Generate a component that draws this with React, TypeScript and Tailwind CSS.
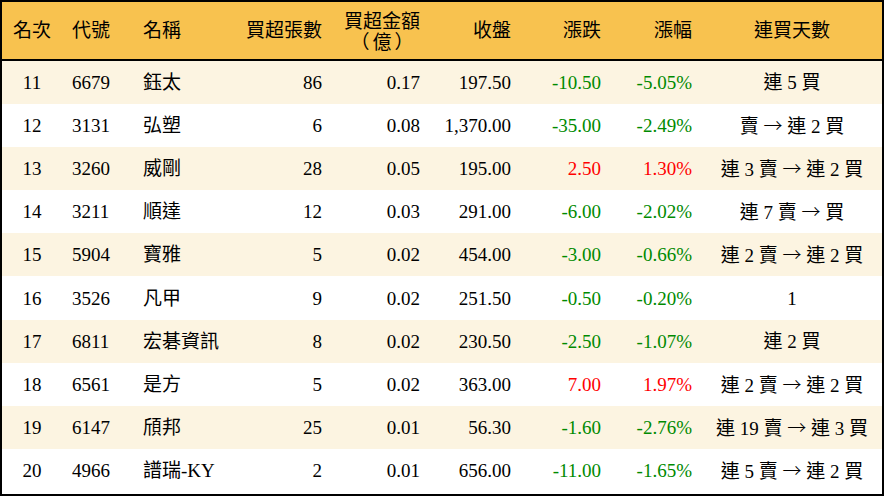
import React from 'react';

type Row = {
  rank: string;
  code: string;
  name: string;
  lots: string;
  amount: string;
  close: string;
  change: string;
  pct: string;
  streak: string;
};

const rows: Row[] = [
  { rank: '11', code: '6679', name: '鈺太', lots: '86', amount: '0.17', close: '197.50', change: '-10.50', pct: '-5.05%', streak: '連 5 買' },
  { rank: '12', code: '3131', name: '弘塑', lots: '6', amount: '0.08', close: '1,370.00', change: '-35.00', pct: '-2.49%', streak: '賣 → 連 2 買' },
  { rank: '13', code: '3260', name: '威剛', lots: '28', amount: '0.05', close: '195.00', change: '2.50', pct: '1.30%', streak: '連 3 賣 → 連 2 買' },
  { rank: '14', code: '3211', name: '順達', lots: '12', amount: '0.03', close: '291.00', change: '-6.00', pct: '-2.02%', streak: '連 7 賣 → 買' },
  { rank: '15', code: '5904', name: '寶雅', lots: '5', amount: '0.02', close: '454.00', change: '-3.00', pct: '-0.66%', streak: '連 2 賣 → 連 2 買' },
  { rank: '16', code: '3526', name: '凡甲', lots: '9', amount: '0.02', close: '251.50', change: '-0.50', pct: '-0.20%', streak: '1' },
  { rank: '17', code: '6811', name: '宏碁資訊', lots: '8', amount: '0.02', close: '230.50', change: '-2.50', pct: '-1.07%', streak: '連 2 買' },
  { rank: '18', code: '6561', name: '是方', lots: '5', amount: '0.02', close: '363.00', change: '7.00', pct: '1.97%', streak: '連 2 賣 → 連 2 買' },
  { rank: '19', code: '6147', name: '頎邦', lots: '25', amount: '0.01', close: '56.30', change: '-1.60', pct: '-2.76%', streak: '連 19 賣 → 連 3 買' },
  { rank: '20', code: '4966', name: '譜瑞-KY', lots: '2', amount: '0.01', close: '656.00', change: '-11.00', pct: '-1.65%', streak: '連 5 賣 → 連 2 買' },
];

const cols = 'grid grid-cols-[60px_70px_100px_100px_98px_91px_90px_91px_180px]';

// the arrow in the source is a long thin one, so it takes the CJK face
const Streak = ({ text }: { text: string }) => {
  const parts = text.split('→');
  return (
    <>
      {parts.map((p, i) => (
        <React.Fragment key={i}>
          {i > 0 && <span style={{ fontFamily: '"Noto Sans CJK TC", sans-serif' }} className="font-light">→</span>}
          {p}
        </React.Fragment>
      ))}
    </>
  );
};

export default function App() {
  return (
    <div
      className="w-[884px] h-[496px] border-2 border-black bg-white text-[19px] leading-[21px] text-black flex flex-col"
      style={{ fontFamily: '"Liberation Serif", "Noto Sans CJK TC", serif' }}
    >
      <div className={`${cols} h-[59px] shrink-0 items-center bg-[#f8c24f] border-b-2 border-black`}>
        <div className="text-center">名次</div>
        <div className="pl-[10px]">代號</div>
        <div className="pl-[11px]">名稱</div>
        <div className="text-right pr-[10px]">買超張數</div>
        <div className="flex justify-end pr-[10px]">
          <div className="flex flex-col items-center mt-[3px]">
            <span>買超金額</span>
            <span className="flex gap-[3px]">
              <span>（</span>
              <span>億</span>
              <span>）</span>
            </span>
          </div>
        </div>
        <div className="text-right pr-[10px]">收盤</div>
        <div className="text-right pr-[10px]">漲跌</div>
        <div className="text-right pr-[10px]">漲幅</div>
        <div className="text-center">連買天數</div>
      </div>
      {rows.map((r, i) => {
        const up = !r.change.startsWith('-');
        const tone = up ? 'text-[#ff0000]' : 'text-[#008a00]';
        return (
          <div
            key={r.rank}
            className={`${cols} h-[43.1px] shrink-0 items-center ${i % 2 === 0 ? 'bg-[#fcf4e1]' : 'bg-white'}`}
          >
            <div className="text-center">{r.rank}</div>
            <div className="pl-[10px]">{r.code}</div>
            <div className="pl-[11px] whitespace-nowrap">{r.name}</div>
            <div className="text-right pr-[10px]">{r.lots}</div>
            <div className="text-right pr-[10px]">{r.amount}</div>
            <div className="text-right pr-[10px]">{r.close}</div>
            <div className={`text-right pr-[10px] ${tone}`}>{r.change}</div>
            <div className={`text-right pr-[10px] ${tone}`}>{r.pct}</div>
            <div className="text-center whitespace-nowrap">
              <Streak text={r.streak} />
            </div>
          </div>
        );
      })}
    </div>
  );
}
